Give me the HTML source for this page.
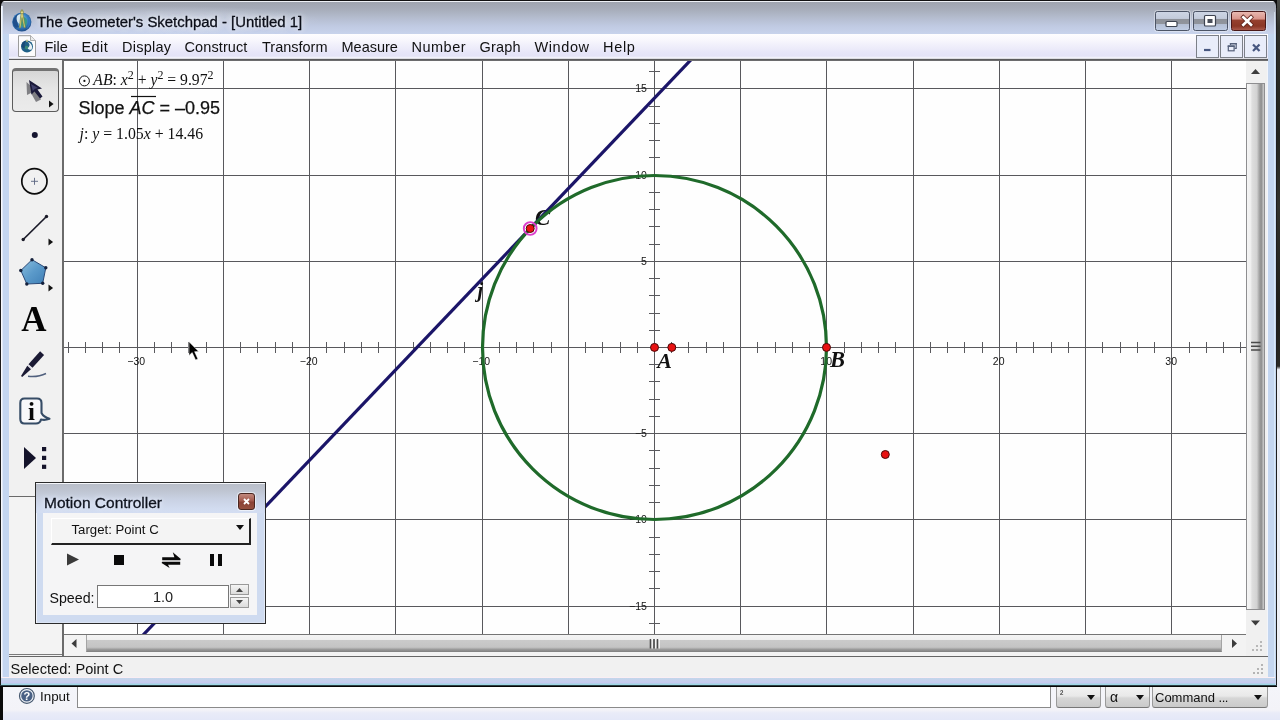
<!DOCTYPE html>
<html>
<head>
<meta charset="utf-8">
<title>The Geometer's Sketchpad - [Untitled 1]</title>
<style>
html,body{margin:0;padding:0;}
body{width:1280px;height:720px;overflow:hidden;background:#c9d7ef;font-family:"Liberation Sans",sans-serif;}
#root{will-change:transform;position:absolute;left:0;top:0;width:1280px;height:720px;overflow:hidden;background:#c6d5ee;}
.abs{position:absolute;}
svg{display:block;}
/* desktop strip on right */
#deskR{left:1276px;top:0;width:4px;height:687px;background:linear-gradient(#4a4c48 0,#2e2f2b 4%,#242521 20%,#33332e 30%,#1e1e1b 45%,#2a2925 53.3%,#eceef4 53.8%,#eef0f6 100%);}
/* outer frame */
#frame{left:0;top:0;width:1277px;height:685px;background:#c4d6f0;border-left:1px solid #1c1c1c;border-right:1px solid #1e1e1e;box-sizing:border-box;}
#frameL{left:1px;top:6px;width:2px;height:679px;background:linear-gradient(90deg,#f6f8fd 0,#f6f8fd 50%,#dfe8f7 50%,#dfe8f7 100%);}
#frameR{left:1267px;top:34px;width:1px;height:643px;background:#f2f5fb;}
#frameB{left:1px;top:677px;width:1274px;height:8px;background:linear-gradient(#fbeef4 0,#fbeef4 1px,#c3d7ea 1px,#c6cdee 5px,#c8c8f0 6px,#9fd6e4 7px,#9fd6e4 8px);}
#frameBline{left:0;top:685px;width:1277px;height:2px;background:linear-gradient(#2c3e44 0,#2c3e44 50%,#050505 50%,#050505 100%);}
/* title bar */
#titlebar{left:1px;top:0;width:1275px;height:34px;border-radius:6px 6px 0 0;background:linear-gradient(#111 0,#111 1px,#eef1f6 1px,#eef1f6 2px,#9fa4af 2px,#a6acb9 9px,#b3bbcd 17px,#c0cae2 26px,#c8d3ec 34px);}
.corner{top:0;width:8px;height:8px;background:#0c0c0c;}
#title{left:37px;top:13.5px;font-size:14.9px;color:#0b0e18;-webkit-text-stroke:0.3px #0b0e18;white-space:nowrap;text-shadow:0 0 5px rgba(255,255,255,.85),0 0 9px rgba(255,255,255,.7),0 0 14px rgba(236,240,250,.6);}
#titleglow{left:30px;top:6px;width:290px;height:28px;background:radial-gradient(ellipse closest-side at center,rgba(232,238,250,.38) 0,rgba(228,234,248,.25) 55%,rgba(220,228,245,0) 100%);}
/* caption buttons */
.cap{top:11px;height:19.5px;box-sizing:border-box;border:1px solid #4c5466;border-radius:2.5px;box-shadow:0 0 0 1px rgba(255,255,255,.35);}
#bmin,#bmax{background:linear-gradient(#cdd5e4 0,#c3cbdb 36%,#8d9199 39%,#90949c 64%,#b4bfd4 68%,#bfcce3 100%);}
#bclose{background:linear-gradient(#e8b8b0 0,#d9948a 40%,#96412f 44%,#8b3725 78%,#a9584a 100%);border-color:#4a1818;}
/* menu bar */
#menubar{left:9px;top:34px;width:1259px;height:24px;background:linear-gradient(#fefdff 0,#f8f7fd 25%,#eeedfa 55%,#e6e5f8 80%,#e4e3f7 92%,#f6f6fc 100%);}
#menuline{left:9px;top:58px;width:1259px;height:2px;background:linear-gradient(#dcdce2 0,#dcdce2 50%,#5b5b5d 50%,#5b5b5d 100%);}
#canvastop{left:62px;top:60px;width:1206px;height:1px;background:#6c6c6e;}
.menu{top:39px;font-size:14.5px;color:#111;white-space:nowrap;}
.mdi{top:35px;height:23px;width:23px;box-sizing:border-box;border:1px solid #7c8088;background:#e9edfa;}
/* toolbar */
#toolbar{left:9px;top:60px;width:53px;height:436px;background:#f1f1f1;border-bottom:1px solid #6a6a6a;}
#toolbelow{left:9px;top:497px;width:53px;height:159px;background:#f3f3f3;}
#selbtn{left:12px;top:68px;width:47px;height:44px;box-sizing:border-box;border:1px solid #5c5c5c;border-top:3px solid #727272;border-radius:4px;background:linear-gradient(#d6d6d6 0,#dedede 20%,#e6e6e6 45%,#ebebeb 100%);}
/* canvas */
#canvasborder{left:62px;top:61px;width:2px;height:595px;background:#6b6b6b;}
/* scrollbars */
#vscroll{left:1246px;top:61px;width:21px;height:573px;background:#f0f0f0;}
#vthumb{left:1246px;top:83px;width:19px;height:527px;box-sizing:border-box;border:1px solid #8e8e90;background:linear-gradient(90deg,#f5f5f5 0,#f0f0f0 20%,#dedede 30%,#d2d2d2 58%,#a4a4a4 72%,#8e8e8e 84%,#b4b4b4 93%,#cfcfcf 100%);}
#hscroll{left:64px;top:634px;width:1182px;height:22px;background:#f3f3f3;border-top:1px solid #747474;box-sizing:border-box;}
#corner{left:1246px;top:634px;width:21px;height:22px;background:#f0f0f0;}
#hthumb{left:86px;top:635px;width:1136px;height:17px;box-sizing:border-box;border:1px solid #a4a4a4;border-top:none;border-bottom:1px solid #858585;background:linear-gradient(#f4f4f4 0,#efefef 30%,#cacaca 34%,#c4c4c4 76%,#959595 92%,#8c8c8c 100%);}
#statusline{left:9px;top:656px;width:1259px;height:1px;background:#666;}
#status{left:9px;top:657px;width:1259px;height:20px;background:#f1f1f1;}
#statustext{left:10.5px;top:660.6px;font-size:14.6px;color:#111;white-space:nowrap;}
/* input bar */
#inputbar{left:0;top:687px;width:1280px;height:33px;background:linear-gradient(#f4f5fa 0,#f3f3f8 23px,#e9ebf8 26px,#e4e8f8 33px);}
#inputL{left:0;top:687px;width:3px;height:33px;background:#0a0a0a;}
#inputfield{left:77px;top:687px;width:974px;height:21px;box-sizing:border-box;background:#fff;border:1px solid #8a8a8a;border-top:none;}
.combo{top:687px;height:21px;box-sizing:border-box;border:1px solid #9a9a9a;border-top:none;border-bottom:1px solid #777;border-radius:0 0 3px 3px;background:linear-gradient(#f2f2f2 0,#e9e9e9 45%,#d6d6d6 55%,#cacaca 100%);}
.carrow{width:0;height:0;border-left:4.5px solid transparent;border-right:4.5px solid transparent;border-top:5px solid #111;}
/* motion controller */
#mc{left:35px;top:482px;width:231px;height:142px;box-sizing:border-box;border:1px solid #2b2b2b;background:#cfdbf0;box-shadow:inset 1px 0 0 #f0f3fa,inset -1px 0 0 #e2e9f6,inset 0 -1px 0 #dbe4f4;}
#mctitlebg{left:36px;top:483px;width:229px;height:30px;background:linear-gradient(#f4f6fa 0,#f4f6fa 1px,#b9bec9 1px,#bfc5d2 8px,#c9d1e3 16px,#d2dcf0 26px,#d3ddf2 30px);}
#mcclient{left:43px;top:513px;width:214px;height:102px;background:#f5f5f6;}
#mctitle{left:44px;top:494px;font-size:15.5px;color:#10141f;-webkit-text-stroke:0.3px #10141f;white-space:nowrap;text-shadow:0 0 4px #e8eefc,0 0 6px #e8eefc;}
#mcclose{left:238px;top:493px;width:17px;height:17px;box-sizing:border-box;border:1px solid #4a2620;border-radius:3px;background:linear-gradient(#c2897e 0,#a35a4e 45%,#8a4236 55%,#96503f 100%);box-shadow:0 0 0 1px rgba(255,255,255,.55);}
#mcdrop{left:51px;top:518px;width:199.7px;height:27px;box-sizing:border-box;background:#f4f4f4;border-top:1px solid #fff;border-left:1px solid #fff;border-right:2px solid #222;border-bottom:2px solid #222;}
#mcdroptext{left:71.5px;top:521.5px;font-size:13.2px;color:#111;white-space:nowrap;}
#mcspeedlab{left:49.5px;top:589.5px;font-size:14.2px;color:#111;white-space:nowrap;}
#mcspeed{left:97px;top:585px;width:132px;height:23px;box-sizing:border-box;border:1px solid #777;background:#fff;}
#mcspeedval{left:153px;top:589px;font-size:14.5px;color:#222;white-space:nowrap;}
.spin{left:230px;width:19px;height:11px;box-sizing:border-box;border:1px solid #999;background:linear-gradient(#f4f4f4,#dcdcdc);}

#frameR2{left:1274px;top:12px;width:1px;height:672px;background:rgba(235,250,255,.55);}

</style>
</head>
<body>
<div id="root">
<div id="deskR" class="abs"></div>
<div id="frame" class="abs"></div>
<div class="abs corner" style="left:0"></div><div class="abs corner" style="left:1269px"></div>
<div id="titlebar" class="abs"></div>
<div id="frameL" class="abs"></div>
<div id="frameR" class="abs"></div>
<div id="frameR2" class="abs"></div>
<div id="titleglow" class="abs"></div>
<svg class="abs" style="left:9px;top:7px" width="26" height="27" viewBox="9 7 26 27">
  <defs><radialGradient id="gl" cx="45%" cy="40%" r="62%"><stop offset="0" stop-color="#9ccdea"/><stop offset="0.55" stop-color="#3b86c8"/><stop offset="1" stop-color="#1b4782"/></radialGradient></defs>
  <circle cx="21.8" cy="22" r="9.6" fill="url(#gl)"/>
  <path d="M13.2 19.5c1.500-3.800 4.500-5.800 7-6.200c-2.800 3-3.600 8.500-1.200 13.700c-1.800 1.200-3.600 1-4.800-.8c-1.400-2-1.800-4.500-1-6.700z" fill="#1e4f8c"/>
  <path d="M17.400 15.500c1.400-1.300 3-1.500 3.800-.8c-1.300 2.500-1.600 6.500-.5 9.500c-1.800-.2-3.200-1.600-3.800-3.600c-.5-1.800-.3-3.800.5-5.100z" fill="#d4e6f0"/>
  <path d="M21.200 17.500c2-1 4.500-.2 5.500 2c1 2.300.4 5.500-1.700 7.600c-1.700.4-3.200-.3-3.900-1.800c-1-2.300-1-5.600.1-7.800z" fill="#3a9a88"/>
  <path d="M27.800 16c2 1.800 3 4.500 2.600 7.200c-.5 2.600-2 4.800-4.200 6c1.600-2.200 2.400-5 2.400-7.600c0-2-.3-4-0.800-5.600z" fill="#2f78c0"/>
  <path d="M21.300 9.800 L22.700 9.800 L23 14 L25.400 27.500 L24 27.800 L22 17.500 L20.600 28 L19.200 27.700 L21 14 Z" fill="#d9d27a" stroke="#6f7a3a" stroke-width="0.5"/>
  <circle cx="22" cy="12.300" r="1.500" fill="#e4dc8a" stroke="#6a6a30" stroke-width="0.5"/>
</svg>
<div id="title" class="abs">The Geometer's Sketchpad - [Untitled 1]</div>
<!-- caption buttons -->
<div id="bmin" class="abs cap" style="left:1154.5px;width:35.5px"></div>
<div id="bmax" class="abs cap" style="left:1192.5px;width:35px"></div>
<div id="bclose" class="abs cap" style="left:1230.5px;width:35px"></div>
<svg class="abs" style="left:1150px;top:8px" width="120" height="26" viewBox="1150 8 120 26">
  <rect x="1166" y="21.5" width="11" height="5" rx="1" fill="#fff" stroke="#3d4350" stroke-width="1.2"/>
  <rect x="1204.5" y="15.5" width="11" height="10.5" rx="1" fill="#fff" stroke="#3d4350" stroke-width="1.2"/>
  <rect x="1207.5" y="19" width="5" height="4" fill="#4a4f5a"/>
  <path d="M1243.3 17.3 L1251 24.8 M1251 17.3 L1243.3 24.8" stroke="#5a2018" stroke-width="4.2" stroke-linecap="square"/>
  <path d="M1243.3 17.3 L1251 24.8 M1251 17.3 L1243.3 24.8" stroke="#fff" stroke-width="2.7" stroke-linecap="square"/>
</svg>
<!-- menu bar -->
<div id="menubar" class="abs"></div>
<div id="menuline" class="abs"></div>
<div id="canvastop" class="abs"></div>
<svg class="abs" style="left:16px;top:34px" width="22" height="25" viewBox="16 34 22 25">
  <path d="M18.500 35.700 H30.500 L35.500 40.500 V56.500 H18.500 Z" fill="#fcfcfd" stroke="#9c9c9c" stroke-width="1"/>
  <path d="M30.500 35.700 V40.500 H35.500" fill="#ececec" stroke="#9c9c9c" stroke-width="0.800"/>
  <circle cx="27" cy="46.600" r="6" fill="#1f6088"/>
  <path d="M22 43.500c1-1.800 2.800-2.800 4.300-2.900c-1.700 1.700-2.200 4.600-.9 7.300c-1.600.5-3-.1-3.600-1.500c-.4-.9-.3-2 .2-2.900z" fill="#184a78"/>
  <path d="M27.500 42c1.800.2 3.400 1.500 4.200 3.200c.6 1.500.5 3.200-.3 4.600c-1.800.2-3.500-.5-4.500-2c1.800-.3 2.800-1.500 2.600-3c-.1-1.200-.9-2.200-2-2.800z" fill="#e8f0f4"/>
  <path d="M25.500 46c1-.6 2.200-.3 2.700.6c.4.900 0 2-.9 2.600c-1 .4-2-.1-2.400-1c-.3-.8-.1-1.700.6-2.200z" fill="#3a8a78"/>
  <path d="M26.600 39.400 L27.400 39.400 L27.700 42 L26.300 42 Z" fill="#d0c870"/>
</svg>
<div class="abs menu" style="left:44.5px">File</div>
<div class="abs menu" style="left:81.5px;letter-spacing:.4px">Edit</div>
<div class="abs menu" style="left:122px;letter-spacing:.25px">Display</div>
<div class="abs menu" style="left:184.5px;letter-spacing:.1px">Construct</div>
<div class="abs menu" style="left:262px">Transform</div>
<div class="abs menu" style="left:341.5px">Measure</div>
<div class="abs menu" style="left:411.5px;letter-spacing:.5px">Number</div>
<div class="abs menu" style="left:479.5px;letter-spacing:.2px">Graph</div>
<div class="abs menu" style="left:534.5px;letter-spacing:.6px">Window</div>
<div class="abs menu" style="left:603px;letter-spacing:.7px">Help</div>
<div class="abs mdi" style="left:1196px"></div>
<div class="abs mdi" style="left:1220px"></div>
<div class="abs mdi" style="left:1244px"></div>
<svg class="abs" style="left:1196px;top:35px" width="72" height="23" viewBox="1196 35 72 23">
  <path d="M1204 50 H1210.500" stroke="#475780" stroke-width="2.200"/>
  <path d="M1230.5 45 V43.5 H1236.2 V48.3 H1234.5" fill="none" stroke="#55607a" stroke-width="1.2"/>
  <rect x="1228.3" y="46" width="5.8" height="4.8" fill="none" stroke="#55607a" stroke-width="1.2"/>
  <path d="M1227.7 46.2 H1234.7 M1229.9 43.7 H1236.8" stroke="#55607a" stroke-width="1.5"/>
  <path d="M1253 44.500 L1259.500 51 M1259.500 44.500 L1253 51" stroke="#475780" stroke-width="2.200"/>
</svg>
<!-- toolbar -->
<div id="toolbar" class="abs"></div>
<div id="toolbelow" class="abs"></div>
<div id="selbtn" class="abs"></div>
<div class="abs" style="left:9px;top:654px;width:54px;height:1px;background:#7a7a7a"></div>
<svg class="abs" style="left:9px;top:61px" width="53" height="436" viewBox="9 61 53 436">
<defs><linearGradient id="pg" x1="0" y1="0" x2="1" y2="1"><stop offset="0" stop-color="#8dc0de"/><stop offset="0.5" stop-color="#5b9aca"/><stop offset="1" stop-color="#3f7fb6"/></linearGradient></defs>
<path d="M26.5 82 L27 95 L31 93 L36 102 L41 99.5 L36.5 91 Z" fill="#6d6d72" opacity="0.85"/>
<path d="M29 80 L31.5 94.5 L34.5 91.5 L40 98.500 L42.500 96.500 L37.500 89.500 L42 88.500 Z" fill="#1b1a3a"/>
<path d="M31 84 L32.800 91 L35 88.800 L38 88 Z" fill="#4a4a78" opacity="0.8"/>
<path d="M49 100.4 L53.6 104 L49 107.6 Z" fill="#111"/>
<path d="M48.5 238.4 L53.1 242 L48.5 245.6 Z" fill="#111"/>
<path d="M48.5 284.4 L53.1 288 L48.5 291.6 Z" fill="#111"/>
<circle cx="34.800" cy="135" r="3" fill="#151530"/>
<circle cx="34.400" cy="181.300" r="12.600" fill="none" stroke="#0c0c0c" stroke-width="1.700"/>
<path d="M31 181.300 H38 M34.500 177.800 V184.800" stroke="#5a6480" stroke-width="0.900"/>
<path d="M23.200 239.500 L46.500 216.500" stroke="#1a1a28" stroke-width="1.700"/>
<circle cx="23.200" cy="239.500" r="1.700" fill="#1a1a28"/><circle cx="46.500" cy="216.500" r="1.700" fill="#1a1a28"/>
<path d="M32 259.700 L45.800 267.800 L42.700 283.300 L26.800 284 L20.800 270.500 Z" fill="url(#pg)" stroke="#2b4a78" stroke-width="1"/>
<circle cx="32" cy="259.7" r="1.700" fill="#14203c"/>
<circle cx="45.8" cy="267.8" r="1.700" fill="#14203c"/>
<circle cx="42.7" cy="283.3" r="1.700" fill="#14203c"/>
<circle cx="26.8" cy="284" r="1.700" fill="#14203c"/>
<circle cx="20.8" cy="270.5" r="1.700" fill="#14203c"/>
<text x="34" y="330.500" font-family="Liberation Serif, serif" font-weight="bold" font-size="35" text-anchor="middle" fill="#050505">A</text>
<path d="M40.1 351.3 L44.1 354.9 L32.5 367.8 L28.5 364.2 Z" fill="#1b1a34"/>
<path d="M28.1 364.7 L32.0 368.3 L31.4 369.0 L27.5 365.4 Z" fill="#dcdce8"/>
<path d="M27.3 365.7 L31.0 369.2 L22.2 376.9 L21.0 375.9 Z" fill="#1b1a34"/>
<path d="M28 376.3 C34 376.9 41 376 46 373.500" fill="none" stroke="#50607e" stroke-width="1.400"/>
<path d="M24.500 398.500 H37 Q41.500 398.500 41.500 403 V413 Q43.500 417 49.500 418.800 Q45 420.500 41 419.500 Q40 423.500 36 423.500 H24.500 Q20.300 423.500 20.300 419 V403 Q20.300 398.500 24.500 398.500 Z" fill="#f8f8fa" stroke="#364c66" stroke-width="2.100" stroke-linejoin="round"/>
<text x="31.500" y="420" font-family="Liberation Serif, serif" font-weight="bold" font-size="25" text-anchor="middle" fill="#0a0a0a">i</text>
<path d="M24 447 L36 458 L24 469 Z" fill="#14132a"/>
<rect x="42" y="447" width="4.200" height="4.200" fill="#14132a"/><rect x="42" y="455.800" width="4.200" height="4.200" fill="#14132a"/><rect x="42" y="464.700" width="4.200" height="4.200" fill="#14132a"/>
</svg>
<div id="canvasborder" class="abs"></div>
<svg class="abs" id="cv" style="left:64px;top:61px" width="1182" height="573" viewBox="64 61 1182 573">
<rect x="64" y="61" width="1182" height="573" fill="#fefefe"/>
<path d="M137.5 61V634M223.5 61V634M309.5 61V634M395.5 61V634M482.5 61V634M568.5 61V634M654.5 61V634M740.5 61V634M826.5 61V634M913.5 61V634M999.5 61V634M1085.5 61V634M1171.5 61V634M64 88.5H1246M64 175.5H1246M64 261.5H1246M64 347.5H1246M64 433.5H1246M64 519.5H1246M64 606.5H1246" stroke="#58585c" stroke-width="1" fill="none"/>
<path d="M68.5 342.0V353.0M85.5 342.0V353.0M102.5 342.0V353.0M119.5 342.0V353.0M154.5 342.0V353.0M171.5 342.0V353.0M188.5 342.0V353.0M206.5 342.0V353.0M240.5 342.0V353.0M257.5 342.0V353.0M275.5 342.0V353.0M292.5 342.0V353.0M326.5 342.0V353.0M344.5 342.0V353.0M361.5 342.0V353.0M378.5 342.0V353.0M413.5 342.0V353.0M430.5 342.0V353.0M447.5 342.0V353.0M464.5 342.0V353.0M499.5 342.0V353.0M516.5 342.0V353.0M533.5 342.0V353.0M551.5 342.0V353.0M585.5 342.0V353.0M602.5 342.0V353.0M620.5 342.0V353.0M637.5 342.0V353.0M671.5 342.0V353.0M688.5 342.0V353.0M706.5 342.0V353.0M723.5 342.0V353.0M757.5 342.0V353.0M775.5 342.0V353.0M792.5 342.0V353.0M809.5 342.0V353.0M844.5 342.0V353.0M861.5 342.0V353.0M878.5 342.0V353.0M895.5 342.0V353.0M930.5 342.0V353.0M947.5 342.0V353.0M964.5 342.0V353.0M982.5 342.0V353.0M1016.5 342.0V353.0M1033.5 342.0V353.0M1051.5 342.0V353.0M1068.5 342.0V353.0M1102.5 342.0V353.0M1120.5 342.0V353.0M1137.5 342.0V353.0M1154.5 342.0V353.0M1189.5 342.0V353.0M1206.5 342.0V353.0M1223.5 342.0V353.0M1240.5 342.0V353.0M649.0 71.5H660.0M649.0 106.5H660.0M649.0 123.5H660.0M649.0 140.5H660.0M649.0 157.5H660.0M649.0 192.5H660.0M649.0 209.5H660.0M649.0 226.5H660.0M649.0 244.5H660.0M649.0 278.5H660.0M649.0 295.5H660.0M649.0 313.5H660.0M649.0 330.5H660.0M649.0 364.5H660.0M649.0 381.5H660.0M649.0 399.5H660.0M649.0 416.5H660.0M649.0 450.5H660.0M649.0 468.5H660.0M649.0 485.5H660.0M649.0 502.5H660.0M649.0 537.5H660.0M649.0 554.5H660.0M649.0 571.5H660.0M649.0 588.5H660.0M649.0 623.5H660.0" stroke="#5a5a5e" stroke-width="1" fill="none"/>
<g font-family="Liberation Sans, sans-serif" font-size="10.5" fill="#141414"><text x="136.2" y="364.7" text-anchor="middle">−30</text><text x="308.7" y="364.7" text-anchor="middle">−20</text><text x="481.2" y="364.7" text-anchor="middle">−10</text><text x="826.2" y="364.7" text-anchor="middle">10</text><text x="998.7" y="364.7" text-anchor="middle">20</text><text x="1171.2" y="364.7" text-anchor="middle">30</text><text x="646.9" y="91.5" text-anchor="end">15</text><text x="646.9" y="178.5" text-anchor="end">10</text><text x="646.9" y="264.5" text-anchor="end">5</text><text x="646.9" y="436.5" text-anchor="end">−5</text><text x="646.9" y="522.5" text-anchor="end">−10</text><text x="646.9" y="609.5" text-anchor="end">−15</text></g>
<g font-family="Liberation Serif, serif" font-style="italic" font-weight="bold" fill="#111"><text x="535" y="224.7" font-size="23">C</text><text x="657.2" y="367.6" font-size="22">A</text><text x="830" y="367.3" font-size="22.5">B</text><text x="477.5" y="297.3" font-size="20">j</text></g>
<path d="M693.6 57 L141.2 637" stroke="#1b1568" stroke-width="3.2" fill="none"/>
<circle cx="654.5" cy="347.5" r="172" stroke="#1f6a2a" stroke-width="3.2" fill="none"/>
<circle cx="654.5" cy="347.4" r="4" fill="#e81212" stroke="#4a0808" stroke-width="1"/>
<circle cx="671.8" cy="347.4" r="4" fill="#e81212" stroke="#4a0808" stroke-width="1"/>
<circle cx="826.5" cy="347.4" r="4" fill="#e81212" stroke="#4a0808" stroke-width="1"/>
<circle cx="885.3" cy="454.5" r="4" fill="#e81212" stroke="#4a0808" stroke-width="1"/>
<circle cx="530.2" cy="228.5" r="6.4" fill="none" stroke="#dc3ccc" stroke-width="1.9"/>
<circle cx="530.2" cy="228.5" r="4" fill="#e81212" stroke="#4a0808" stroke-width="1"/>
<g font-family="Liberation Serif, serif" fill="#111" font-size="16"><text x="93.3" y="85.3" font-size="15.7"><tspan font-style="italic">AB</tspan>: <tspan font-style="italic">x</tspan><tspan dy="-6" font-size="12">2</tspan><tspan dy="6"> + </tspan><tspan font-style="italic">y</tspan><tspan dy="-6" font-size="12">2</tspan><tspan dy="6"> = 9.97</tspan><tspan dy="-6" font-size="12">2</tspan></text><text x="79.5" y="138.7" font-size="15.8"><tspan font-style="italic">j</tspan>: <tspan font-style="italic">y</tspan> = 1.05<tspan font-style="italic">x</tspan> + 14.46</text></g>
<g font-family="Liberation Sans, sans-serif" fill="#111" font-size="18" stroke="#111" stroke-width="0.25"><text x="78.5" y="113.5">Slope <tspan font-style="italic">AC</tspan> = –0.95</text></g>
<path d="M131 96.5H156" stroke="#111" stroke-width="1.2"/>
<circle cx="84.4" cy="80.9" r="5" fill="none" stroke="#111" stroke-width="1"/><circle cx="84.4" cy="80.9" r="1.1" fill="#111"/>
<path d="M189 341.8 L189 355.4 L192.2 352.6 L195.6 359.9 L197.9 358.9 L194.6 351.7 L198.6 351.4 Z" fill="#000" stroke="#fff" stroke-width="0.5"/>
</svg>
<!-- scrollbars -->
<div id="vscroll" class="abs"></div>
<div id="vthumb" class="abs"></div>
<div id="hscroll" class="abs"></div>
<div id="corner" class="abs"></div>
<div id="hthumb" class="abs"></div>
<svg class="abs" style="left:64px;top:61px" width="1204" height="596" viewBox="64 61 1204 596">
  <path d="M1251 74 L1255.500 69 L1260 74 Z" fill="#3c3c3c"/>
  <path d="M1251 620.500 L1255.500 625.500 L1260 620.500 Z" fill="#3c3c3c"/>
  <path d="M76.500 639 L71.500 643.500 L76.500 648 Z" fill="#3c3c3c"/>
  <path d="M1232 639 L1237 643.500 L1232 648 Z" fill="#3c3c3c"/>
  <path d="M650.500 639 V648.500 M654 639 V648.500 M657.500 639 V648.500" stroke="#4a4a4a" stroke-width="1.600"/>
  <path d="M652.200 639 V648.500 M655.700 639 V648.500 M659.200 639 V648.500" stroke="#fff" stroke-width="1"/>
  <path d="M1251 342.5 H1260.5 M1251 346.2 H1260.5 M1251 349.9 H1260.5" stroke="#4a4a4a" stroke-width="1.5"/>
  <g fill="#b8b8b8"><rect x="1260" y="641" width="2" height="2"/><rect x="1256" y="645" width="2" height="2"/><rect x="1260" y="645" width="2" height="2"/><rect x="1252" y="649" width="2" height="2"/><rect x="1256" y="649" width="2" height="2"/><rect x="1260" y="649" width="2" height="2"/></g>
</svg>
<div id="statusline" class="abs"></div>
<div id="status" class="abs"></div>
<div id="statustext" class="abs">Selected: Point C</div>
<svg class="abs" style="left:1250px;top:662px" width="16" height="14" viewBox="1250 662 16 14">
  <g fill="#b4b4b4"><rect x="1261" y="664" width="2" height="2"/><rect x="1257" y="668" width="2" height="2"/><rect x="1261" y="668" width="2" height="2"/><rect x="1253" y="672" width="2" height="2"/><rect x="1257" y="672" width="2" height="2"/><rect x="1261" y="672" width="2" height="2"/></g>
</svg>
<div id="frameB" class="abs"></div>
<div id="frameBline" class="abs"></div>
<!-- input bar -->
<div id="inputbar" class="abs"></div>
<div id="inputL" class="abs"></div>
<div id="inputfield" class="abs"></div>
<svg class="abs" style="left:18px;top:687px" width="18" height="18" viewBox="18 687 18 18">
  <circle cx="26.9" cy="695.9" r="7.4" fill="#f2f5fa" stroke="#46586f" stroke-width="1.2"/>
  <circle cx="26.9" cy="695.9" r="5.7" fill="#4a6184"/>
  <text x="26.9" y="700" font-family="Liberation Sans, sans-serif" font-weight="bold" font-size="11" fill="#fff" text-anchor="middle">?</text>
</svg>
<div class="abs" style="left:40px;top:689px;font-size:13.4px;color:#111">Input</div>
<div class="abs combo" style="left:1056px;width:45px"></div>
<div class="abs combo" style="left:1105px;width:45px"></div>
<div class="abs combo" style="left:1152px;width:116px"></div>
<div class="abs" style="left:1060px;top:688px;font-size:10px;color:#111">²</div>
<div class="abs" style="left:1110px;top:689px;font-size:14px;color:#111">α</div>
<div class="abs" style="left:1155px;top:689.5px;font-size:13px;color:#111;white-space:nowrap">Command <span style="letter-spacing:-0.5px">...</span></div>
<div class="abs carrow" style="left:1087px;top:695px"></div>
<div class="abs carrow" style="left:1136px;top:695px"></div>
<div class="abs carrow" style="left:1254px;top:695px"></div>
<!-- motion controller -->
<div id="mc" class="abs"></div>
<div id="mctitlebg" class="abs"></div>
<div id="mcclient" class="abs"></div>
<div id="mctitle" class="abs">Motion Controller</div>
<div id="mcclose" class="abs"></div>
<div id="mcdrop" class="abs"></div>
<div id="mcdroptext" class="abs">Target: Point C</div>
<div class="abs carrow" style="left:235.500px;top:525px"></div>
<svg class="abs" style="left:43px;top:545px" width="214" height="30" viewBox="43 545 214 30">
  <path d="M67 553.500 L79 559.500 L67 565.500 Z" fill="#3a3a3a"/>
  <rect x="114" y="555" width="10" height="10" fill="#0a0a0a"/>
  <path d="M162.2 557.2 H174.4 L172.8 552.2 L180.8 559 L180.2 560.2 H162.2 Z" fill="#0a0a0a"/>
  <path d="M180.2 564.8 H168 L169.600 568 L161.600 563 L162.200 561.800 H180.200 Z" fill="#0a0a0a"/>
  <rect x="210" y="554" width="4" height="12" fill="#0a0a0a"/>
  <rect x="218" y="554" width="4" height="12" fill="#0a0a0a"/>
  <path d="M246.500 498 L249.500 501 M249.500 498 L246.500 501" stroke="#fff" stroke-width="1.500"/>
</svg>
<svg class="abs" style="left:238px;top:493px" width="17" height="17" viewBox="0 0 17 17"><path d="M6 6 L11 11 M11 6 L6 11" stroke="#fff" stroke-width="1.800"/></svg>
<div id="mcspeedlab" class="abs">Speed:</div>
<div id="mcspeed" class="abs"></div>
<div id="mcspeedval" class="abs">1.0</div>
<div class="abs spin" style="top:584px"></div>
<div class="abs spin" style="top:597px"></div>
<svg class="abs" style="left:230px;top:584px" width="19" height="24" viewBox="0 0 19 24">
  <path d="M6 8 L9.500 4 L13 8 Z" fill="#444"/>
  <path d="M6 16 L9.500 20 L13 16 Z" fill="#444"/>
</svg>

</div>
</body>
</html>
